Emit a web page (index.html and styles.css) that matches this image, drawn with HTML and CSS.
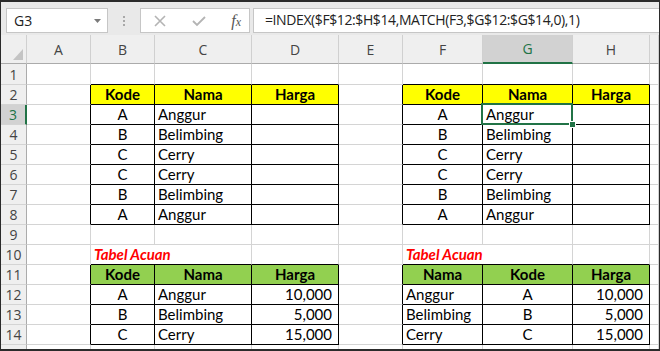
FILE: index.html
```html
<!DOCTYPE html>
<html lang="id">
<head>
    <meta charset="UTF-8">
    <meta name="viewport" content="width=device-width, initial-scale=1.0">
    <title>INDEX MATCH - Tabel Acuan</title>
    <link rel="stylesheet" href="styles.css">
</head>
<body>
<div class="frame">
    <!-- formula bar -->
    <div class="toolbar">
        <div class="namebox">
            <span>G3</span>
            <svg class="caret" width="7" height="4" viewBox="0 0 7 4"><polygon points="0,0 7,0 3.5,4" fill="#7a7a7a"/></svg>
        </div>
        <div class="grip"><i></i><i></i><i></i></div>
        <div class="buttons">
            <svg width="12" height="12" viewBox="0 0 12 12"><path d="M1 1 L11 11 M11 1 L1 11" stroke="#b4b4b4" stroke-width="1.6"/></svg>
            <svg width="14" height="12" viewBox="0 0 14 12"><path d="M1 6 L5 10 L13 2" stroke="#b4b4b4" stroke-width="1.8" fill="none"/></svg>
            <span class="fx">f<small>x</small></span>
        </div>
        <div class="formula">=INDEX($F$12:$H$14,MATCH(F3,$G$12:$G$14,0),1)</div>
    </div>

    <!-- sheet -->
    <table class="sheet">
        <colgroup>
            <col class="w-rh"><col class="w-a"><col class="w-b"><col class="w-c"><col class="w-d">
            <col class="w-e"><col class="w-f"><col class="w-g"><col class="w-h"><col>
        </colgroup>
        <tr class="colhead">
            <td class="corner"><svg width="10" height="11" viewBox="0 0 10 11"><polygon points="10,0 10,11 0,11" fill="#c4c4c4"/></svg></td>
            <td>A</td><td>B</td><td>C</td><td>D</td><td>E</td><td>F</td><td class="on">G</td><td>H</td><td></td>
        </tr>
        <tr class="first">
            <td class="rh">1</td><td></td><td class="above"></td><td class="above"></td><td class="above"></td><td></td><td class="above"></td><td class="above"></td><td class="above"></td><td></td>
        </tr>
        <tr>
            <td class="rh">2</td><td class="edge"></td>
            <td class="t hy">Kode</td><td class="t hy">Nama</td><td class="t hy">Harga</td>
            <td class="edge"></td>
            <td class="t hy">Kode</td><td class="t hy">Nama</td><td class="t hy">Harga</td><td></td>
        </tr>
        <tr>
            <td class="rh on">3</td><td class="edge"></td>
            <td class="t mid">A</td><td class="t">Anggur</td><td class="t"></td>
            <td class="edge"></td>
            <td class="t mid">A</td><td class="t active">Anggur<div class="sel"><b></b></div></td><td class="t"></td><td></td>
        </tr>
        <tr>
            <td class="rh">4</td><td class="edge"></td>
            <td class="t mid">B</td><td class="t">Belimbing</td><td class="t"></td>
            <td class="edge"></td>
            <td class="t mid">B</td><td class="t">Belimbing</td><td class="t"></td><td></td>
        </tr>
        <tr>
            <td class="rh">5</td><td class="edge"></td>
            <td class="t mid">C</td><td class="t">Cerry</td><td class="t"></td>
            <td class="edge"></td>
            <td class="t mid">C</td><td class="t">Cerry</td><td class="t"></td><td></td>
        </tr>
        <tr>
            <td class="rh">6</td><td class="edge"></td>
            <td class="t mid">C</td><td class="t">Cerry</td><td class="t"></td>
            <td class="edge"></td>
            <td class="t mid">C</td><td class="t">Cerry</td><td class="t"></td><td></td>
        </tr>
        <tr>
            <td class="rh">7</td><td class="edge"></td>
            <td class="t mid">B</td><td class="t">Belimbing</td><td class="t"></td>
            <td class="edge"></td>
            <td class="t mid">B</td><td class="t">Belimbing</td><td class="t"></td><td></td>
        </tr>
        <tr>
            <td class="rh">8</td><td class="edge"></td>
            <td class="t mid">A</td><td class="t">Anggur</td><td class="t"></td>
            <td class="edge"></td>
            <td class="t mid">A</td><td class="t">Anggur</td><td class="t"></td><td></td>
        </tr>
        <tr>
            <td class="rh">9</td><td></td><td></td><td></td><td></td><td></td><td></td><td></td><td></td><td></td>
        </tr>
        <tr>
            <td class="rh">10</td><td></td>
            <td class="above label" colspan="2">Tabel Acuan</td><td class="above"></td>
            <td></td>
            <td class="above label" colspan="2">Tabel Acuan</td><td class="above"></td><td></td>
        </tr>
        <tr>
            <td class="rh">11</td><td class="edge"></td>
            <td class="t hg">Kode</td><td class="t hg">Nama</td><td class="t hg">Harga</td>
            <td class="edge"></td>
            <td class="t hg">Nama</td><td class="t hg">Kode</td><td class="t hg">Harga</td><td></td>
        </tr>
        <tr>
            <td class="rh">12</td><td class="edge"></td>
            <td class="t mid">A</td><td class="t">Anggur</td><td class="t num">10,000</td>
            <td class="edge"></td>
            <td class="t">Anggur</td><td class="t mid">A</td><td class="t num">10,000</td><td></td>
        </tr>
        <tr>
            <td class="rh">13</td><td class="edge"></td>
            <td class="t mid">B</td><td class="t">Belimbing</td><td class="t num">5,000</td>
            <td class="edge"></td>
            <td class="t">Belimbing</td><td class="t mid">B</td><td class="t num">5,000</td><td></td>
        </tr>
        <tr>
            <td class="rh">14</td><td class="edge"></td>
            <td class="t mid">C</td><td class="t">Cerry</td><td class="t num">15,000</td>
            <td class="edge"></td>
            <td class="t">Cerry</td><td class="t mid">C</td><td class="t num">15,000</td><td></td>
        </tr>
        <tr>
            <td class="rh">15</td><td></td><td></td><td></td><td></td><td></td><td></td><td></td><td></td><td></td>
        </tr>
    </table>
</div>
</body>
</html>
```

FILE: styles.css
```css
body {
    margin: 0;
    padding: 0;
    background: #fff;
}

.frame {
    box-sizing: border-box;
    width: 660px;
    height: 351px;
    border-top: 2px solid #2b2b2b;
    border-bottom: 2px solid #2b2b2b;
    border-left: 1px solid #2b2b2b;
    border-right: 1px solid #2b2b2b;
    overflow: hidden;
    background: #fff;
}

/* formula bar */
.toolbar {
    height: 33px;
    background: #e9e9e9;
    display: flex;
    align-items: flex-start;
    padding-top: 6px;
    box-sizing: border-box;
    font-family: 'Open Sans', sans-serif;
    font-size: 14px;
    color: #222;
}

.namebox {
    box-sizing: border-box;
    width: 102px;
    height: 25px;
    margin-left: 5px;
    background: #fff;
    border: 1px solid #c6c6c6;
    display: flex;
    align-items: center;
    justify-content: space-between;
    padding: 0 6px 0 7px;
}

.caret {
    margin-top: 1px;
}

.grip {
    width: 32px;
    height: 25px;
    display: flex;
    flex-direction: column;
    align-items: center;
    justify-content: center;
    gap: 2px;
}

.grip i {
    width: 2px;
    height: 2px;
    background: #a8a8a8;
}

.buttons {
    box-sizing: border-box;
    width: 110px;
    height: 25px;
    background: #fff;
    border: 1px solid #c6c6c6;
    display: flex;
    align-items: center;
    justify-content: space-between;
    padding: 0 8px 0 13px;
}

.fx {
    font-family: 'Liberation Serif', serif;
    font-style: italic;
    font-size: 16px;
    color: #555;
}

.fx small {
    font-size: 12px;
}

.formula {
    box-sizing: border-box;
    flex: 1;
    height: 25px;
    margin-left: 3px;
    margin-right: -4px;
    background: #fff;
    border: 1px solid #c6c6c6;
    padding-left: 11px;
    line-height: 22px;
    letter-spacing: -0.4px;
    white-space: nowrap;
    overflow: hidden;
}

/* sheet grid */
.sheet {
    border-collapse: separate;
    border-spacing: 0;
    table-layout: fixed;
    width: 658px;
    font-family: 'Lato', sans-serif;
    font-size: 15px;
    color: #000;
}

.w-rh { width: 26px; }
.w-a { width: 64px; }
.w-b { width: 64px; }
.w-c { width: 97px; }
.w-d { width: 87px; }
.w-e { width: 64px; }
.w-f { width: 80px; }
.w-g { width: 90px; }
.w-h { width: 77px; }

.sheet td {
    height: 19px;
    padding: 0 0 0 3px;
    line-height: 19px;
    border-right: 1px solid #d4d4d4;
    border-bottom: 1px solid #d4d4d4;
    white-space: nowrap;
    overflow: hidden;
    vertical-align: middle;
}

.sheet tr.first td {
    height: 20px;
}

.colhead td {
    height: 27px;
    padding: 0;
    background: #efefef;
    border-right-color: #d0d0d0;
    border-bottom-color: #ababab;
    text-align: center;
    font-family: 'Open Sans', sans-serif;
    font-size: 14px;
    color: #444;
    line-height: 27px;
}

.colhead td.corner {
    padding: 0;
    vertical-align: bottom;
    line-height: 0;
}

.corner svg {
    display: block;
    margin: 0 3px 3px auto;
}

.colhead td.on {
    background: #d2d2d2;
    color: #217346;
    border-bottom: 2px solid #217346;
    height: 26px;
}

.sheet td.rh {
    padding: 0;
    background: #efefef;
    border-right-color: #ababab;
    text-align: center;
    font-family: 'Open Sans', sans-serif;
    font-size: 14px;
    color: #444;
}

.sheet td.rh.on {
    background: #d2d2d2;
    color: #217346;
    border-right: 2px solid #217346;
}

/* bordered tables */
.sheet td.t {
    border-right-color: #000;
    border-bottom-color: #000;
}

.sheet td.edge {
    border-right-color: #000;
}

.sheet td.above {
    border-bottom-color: #000;
}

.sheet td.hy,
.sheet td.hg {
    font-weight: bold;
    text-align: center;
    padding: 0;
}

.sheet td.hy {
    background: #ffff00;
}

.sheet td.hg {
    background: #92d050;
}

.sheet td.mid {
    text-align: center;
    padding: 0;
}

.sheet td.num {
    text-align: right;
    padding: 0 6px 0 0;
}

.sheet td.label {
    color: #ff0000;
    font-weight: bold;
    font-style: italic;
}

/* active cell */
.sheet td.active {
    position: relative;
    overflow: visible;
}

.sel {
    position: absolute;
    left: -2px;
    top: -2px;
    right: -1px;
    bottom: -1px;
    border: 2px solid #217346;
    z-index: 1;
}

.sel b {
    position: absolute;
    right: -5px;
    bottom: -5px;
    width: 5px;
    height: 5px;
    background: #217346;
    border: 1px solid #fff;
}
```
